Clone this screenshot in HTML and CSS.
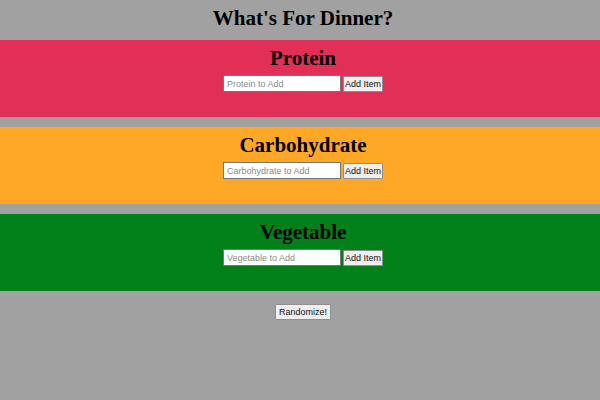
FILE: index.html
```html
<!DOCTYPE html>
<html lang="en">
  <head>
    <meta charset="UTF-8" />
    <meta name="viewport" content="width=device-width, initial-scale=1.0" />
    <title>What's For Dinner?</title>
    <link rel="stylesheet" href="styles.css">
  </head>
  <body>
    <h1 class="title">What's For Dinner?</h1>

    <div class="category protein">
      <h2>Protein</h2>
      <div class="add-row">
        <input type="text" placeholder="Protein to Add" />
        <button>Add Item</button>
      </div>
    </div>

    <div class="category carb">
      <h2>Carbohydrate</h2>
      <div class="add-row">
        <input type="text" placeholder="Carbohydrate to Add" />
        <button>Add Item</button>
      </div>
    </div>

    <div class="category veg">
      <h2>Vegetable</h2>
      <div class="add-row">
        <input type="text" placeholder="Vegetable to Add" />
        <button>Add Item</button>
      </div>
    </div>

    <div class="randomize">
      <button>Randomize!</button>
    </div>
  </body>
</html>
```

FILE: styles.css
```css
body {
  font-family: "Liberation Serif", "Times New Roman", serif;
  background-color: #a1a1a1;
  margin: 0;
}
.title {
  margin: 0;
  height: 40px;
  padding-left: 6px;
  font-size: 21px;
  line-height: 36px;
  text-align: center;
}
.category {
  padding: 5px 0 25px 6px;
  margin-bottom: 10px;
  text-align: center;
}
.category h2 {
  margin: 0 0 3px;
  font-size: 21px;
  line-height: 27px;
}
.protein {
  background-color: #e12f57;
}
.carb {
  background-color: #ffa726;
}
.veg {
  background-color: #017f18;
}
.add-row {
  display: flex;
  justify-content: center;
  align-items: center;
  gap: 2px;
}
input {
  box-sizing: border-box;
  width: 118px;
  height: 17px;
  padding: 0 3px;
  font-family: "Liberation Sans", Arial, sans-serif;
  font-size: 9px;
  border: 1px solid #767676;
  background: white;
}
input::placeholder {
  color: #8a8a8a;
}
button {
  box-sizing: border-box;
  height: 16px;
  padding: 0 1px;
  font-family: "Liberation Sans", Arial, sans-serif;
  font-size: 9px;
  color: #111;
  background: #efefef;
  border: 1px solid #8f8f8f;
  border-radius: 1px;
}
.randomize {
  margin-top: 1px;
  padding-left: 6px;
  text-align: center;
}
.randomize button {
  padding: 0 3px;
}
```
